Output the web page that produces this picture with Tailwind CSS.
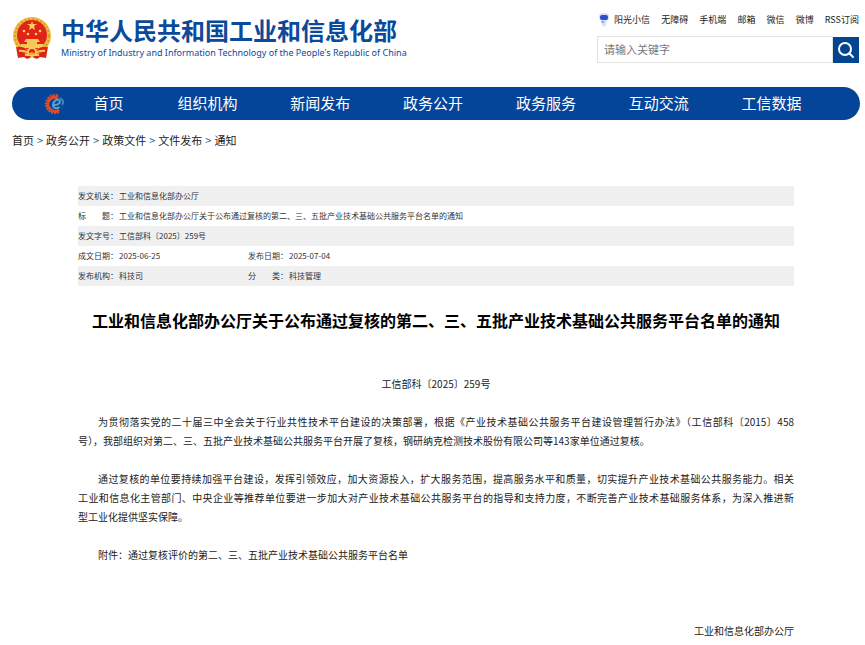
<!DOCTYPE html>
<html lang="zh-CN">
<head>
  <meta charset="UTF-8">
  <meta name="viewport" content="width=device-width, initial-scale=1.0">
  <title>中华人民共和国工业和信息化部</title>
  <script src="https://cdn.jsdelivr.net/npm/@tailwindcss/browser@4"></script>
</head>
<body class="bg-white text-[#222] font-['Noto_Sans_CJK_SC',sans-serif]">
  <!-- Header -->
  <header class="flex justify-between items-start pl-3 pr-[6px] pt-3">
    <a href="#" class="flex items-start gap-[9px]">
      <svg class="w-10 h-12 shrink-0" viewBox="0 0 40 48" aria-hidden="true">
        <path d="M4 35 L36 35 L34 46 L28 45 L25 47 L20 45 L15 47 L12 45 L6 46Z" fill="#d8261c"/>
        <circle cx="20" cy="24" r="19" fill="#f0bd45"/>
        <circle cx="20" cy="24" r="17" fill="none" stroke="#dc9a2c" stroke-width="2" stroke-dasharray="2 2"/>
        <circle cx="20" cy="23" r="15" fill="#e2231a"/>
        <path d="M20 9l1 3h4l-3 2 1 4-3-2-3 2 1-4-3-2h4z" fill="#ffd45a"/>
        <g fill="#ffd45a">
          <circle cx="12" cy="19" r="1.3"/><circle cx="28" cy="19" r="1.3"/>
          <circle cx="16" cy="22" r="1.3"/><circle cx="24" cy="22" r="1.3"/>
        </g>
        <path d="M14 27h12l2 3H12z M15 30h10v2H15z M9 32h22v4H9z" fill="#f7ca55"/>
        <path d="M5 35q6-1 10 3l5-2 5 2q4-4 10-3l-1 7q-6-3-9 0l-5-2-5 2q-3-3-9 0z" fill="#e2231a"/>
        <path d="M7 39q6-1 9 2M33 39q-6-1-9 2M13 43h4M23 43h4" fill="none" stroke="#f7ca55" stroke-width="2"/>
        <circle cx="20" cy="40" r="4" fill="none" stroke="#f7ca55" stroke-width="2"/>
      </svg>
      <span class="block pt-[2px] text-[#0b4a9b] whitespace-nowrap">
        <span class="block text-[24px] leading-8 font-bold">中华人民共和国工业和信息化部</span>
        <span class="block text-[9px] leading-[14px] font-['Noto_Sans',sans-serif]">Ministry of Industry and Information Technology of the People's Republic of China</span>
      </span>
    </a>

    <div class="w-[262px]">
      <div class="flex justify-between items-center h-4 pl-[1px] text-[9px] whitespace-nowrap">
        <a href="#" class="flex items-center gap-1">
          <svg class="w-3 h-4" viewBox="0 0 12 16" aria-hidden="true">
            <rect x="1" y="1" width="10" height="8" rx="4" fill="#d5def7"/>
            <rect x="2" y="3" width="8" height="5" rx="2" fill="#2c50c8"/>
            <path d="M3 9h6l-1 4-2 2-2-2z" fill="#d9e2f5"/>
            <path d="M3 9h3v2H4z" fill="#8ba6e4"/>
          </svg>
          阳光小信
        </a>
        <a href="#">无障碍</a>
        <a href="#">手机端</a>
        <a href="#">邮箱</a>
        <a href="#">微信</a>
        <a href="#">微博</a>
        <a href="#">RSS订阅</a>
      </div>
      <!-- Search -->
      <form class="flex mt-2 h-[27px]">
        <input type="text" aria-label="请输入关键字" placeholder="请输入关键字" class="flex-1 min-w-0 px-[6px] border border-[#e3e3e3] text-[11px] placeholder:text-[#777] outline-none">
        <button type="button" aria-label="搜索" class="w-[26px] h-[26px] self-center bg-[#04458f] flex items-center justify-center">
          <svg class="w-[18px] h-[18px]" viewBox="0 0 18 18" fill="none" stroke="#fff" stroke-width="2" stroke-linecap="round" aria-hidden="true">
            <circle cx="8" cy="8" r="6"/>
            <path d="M12.500 12.500L16 16"/>
          </svg>
        </button>
      </form>
    </div>
  </header>

  <!-- Navigation -->
  <nav class="flex items-center mt-6 ml-3 mr-[5px] h-[33px] px-8 rounded-full bg-[#04459a] text-white text-[15px] text-center">
    <svg class="w-[22px] h-[22px] shrink-0" viewBox="0 0 22 22" fill="none" aria-hidden="true">
      <path d="M15 19A9 9 0 1 1 15 3" stroke="#d9502f" stroke-width="2" stroke-dasharray="2 1"/>
      <path d="M15 17A7 7 0 1 1 14 5" stroke="#e0492b" stroke-width="3"/>
      <path d="M9 11.500C13 13 17 10 15.500 7.500C13.500 5 9 8 9 12C9 15.500 13 16 15.500 14" stroke="#5d9dd0" stroke-width="2"/>
      <path d="M16 5Q21 8 18 12" stroke="#3f87c5" stroke-width="2"/>
    </svg>
    <a href="#" class="w-[85px] shrink-0">首页</a>
    <div class="grid grid-cols-6 flex-1 whitespace-nowrap">
      <a href="#">组织机构</a>
      <a href="#">新闻发布</a>
      <a href="#">政务公开</a>
      <a href="#">政务服务</a>
      <a href="#">互动交流</a>
      <a href="#">工信数据</a>
    </div>
  </nav>

  <!-- Breadcrumb -->
  <div class="flex gap-[3px] px-3 mt-3 text-[11px] leading-4">
    <a href="#">首页</a><span class="text-[#35608f]">&gt;</span>
    <a href="#">政务公开</a><span class="text-[#35608f]">&gt;</span>
    <a href="#">政策文件</a><span class="text-[#35608f]">&gt;</span>
    <a href="#">文件发布</a><span class="text-[#35608f]">&gt;</span>
    <a href="#">通知</a>
  </div>

  <main class="pl-[78px] pr-[71px] pt-[38px]">
    <!-- Document info -->
    <table class="w-full table-fixed text-left text-[8px] leading-5 text-[#333]">
      <colgroup>
        <col class="w-[41px]">
        <col class="w-[129px]">
        <col class="w-[41px]">
        <col>
      </colgroup>
      <tbody>
        <tr class="bg-[#f0f0f0]">
          <th class="font-normal whitespace-nowrap">发文机关：</th>
          <td colspan="3">工业和信息化部办公厅</td>
        </tr>
        <tr>
          <th class="font-normal whitespace-nowrap">标　　题：</th>
          <td colspan="3">工业和信息化部办公厅关于公布通过复核的第二、三、五批产业技术基础公共服务平台名单的通知</td>
        </tr>
        <tr class="bg-[#f0f0f0]">
          <th class="font-normal whitespace-nowrap">发文字号：</th>
          <td colspan="3">工信部科〔2025〕259号</td>
        </tr>
        <tr>
          <th class="font-normal whitespace-nowrap">成文日期：</th>
          <td>2025-06-25</td>
          <th class="font-normal whitespace-nowrap">发布日期：</th>
          <td>2025-07-04</td>
        </tr>
        <tr class="bg-[#f0f0f0]">
          <th class="font-normal whitespace-nowrap">发布机构：</th>
          <td>科技司</td>
          <th class="font-normal whitespace-nowrap">分　　类：</th>
          <td>科技管理</td>
        </tr>
      </tbody>
    </table>

    <h1 class="mt-[22px] text-center text-[16px] leading-6 font-bold text-black whitespace-nowrap">工业和信息化部办公厅关于公布通过复核的第二、三、五批产业技术基础公共服务平台名单的通知</h1>

    <!-- Article -->
    <article class="mt-[42px] text-[10px] leading-[19px]">
      <p class="text-center">工信部科〔2025〕259号</p>
      <p class="mt-[19px]">
        <span class="block pl-5 whitespace-nowrap [text-align-last:justify]">为贯彻落实党的二十届三中全会关于行业共性技术平台建设的决策部署，根据《产业技术基础公共服务平台建设管理暂行办法》（工信部科〔2015〕458</span>
        <span class="block">号），我部组织对第二、三、五批产业技术基础公共服务平台开展了复核，钢研纳克检测技术股份有限公司等143家单位通过复核。</span>
      </p>
      <p class="mt-[19px]">
        <span class="block pl-5 [text-align-last:justify]">通过复核的单位要持续加强平台建设，发挥引领效应，加大资源投入，扩大服务范围，提高服务水平和质量，切实提升产业技术基础公共服务能力。相关</span>
        <span class="block [text-align-last:justify]">工业和信息化主管部门、中央企业等推荐单位要进一步加大对产业技术基础公共服务平台的指导和支持力度，不断完善产业技术基础服务体系，为深入推进新</span>
        <span class="block">型工业化提供坚实保障。</span>
      </p>
      <p class="mt-[19px] pl-5">附件：<a href="#">通过复核评价的第二、三、五批产业技术基础公共服务平台名单</a></p>
      <p class="mt-[57px] text-right">工业和信息化部办公厅</p>
    </article>
  </main>
</body>
</html>
